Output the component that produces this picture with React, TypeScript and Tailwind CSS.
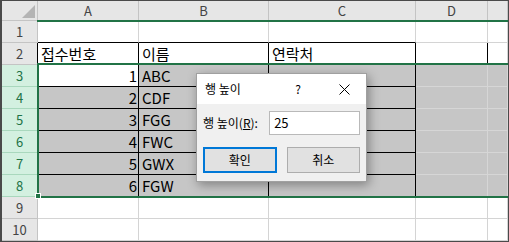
import React from 'react';

const colLetters = ['A', 'B', 'C', 'D', ''];
const names = ['ABC', 'CDF', 'FGG', 'FWC', 'GWX', 'FGW'];

function cellText(r: number, c: number): string {
  if (r === 2) return ['접수번호', '이름', '연락처', '', ''][c];
  if (r >= 3 && r <= 8) {
    if (c === 0) return String(r - 2);
    if (c === 1) return names[r - 3];
  }
  return '';
}

function DataCell({ r, c }: { r: number; c: number }) {
  const sel = r >= 3 && r <= 8;
  const active = r === 3 && c === 0;
  const bg = sel && !active ? 'bg-[#c6c6c6]' : 'bg-white';

  let right = sel ? 'border-r-[#d6d6d6]' : 'border-r-[#d4d4d4]';
  if ((r >= 2 && r <= 8 && c <= 2) || (r === 2 && c === 3)) right = 'border-r-black';

  let bottom = sel ? 'border-b-[#d6d6d6]' : 'border-b-[#d4d4d4]';
  if (r >= 1 && r <= 7 && c <= 2) bottom = 'border-b-black';

  const align = r >= 3 && c === 0 ? 'justify-end pr-[1px]' : 'justify-start pl-[3px]';

  return (
    <div className={`flex items-center border-r border-b ${right} ${bottom} ${bg} ${align} text-[15px] leading-none text-black whitespace-nowrap overflow-hidden`}>
      {cellText(r, c)}
    </div>
  );
}

function RowHeader({ r }: { r: number }) {
  const sel = r >= 3 && r <= 8;
  return (
    <div
      className={`flex items-center justify-center border-r border-b text-[13px] leading-none ${
        sel
          ? 'bg-[#d3f0e0] text-[#217346] border-b-[#a9d8bd] border-r-[#217346]'
          : r === 2
          ? 'bg-[#e6e6e6] text-[#444] border-b-[#c4c4c4] border-r-black'
          : 'bg-[#e6e6e6] text-[#444] border-b-[#c4c4c4] border-r-[#c4c4c4]'
      }`}
    >
      {r}
    </div>
  );
}

export default function App() {
  const rows = [1, 2, 3, 4, 5, 6, 7, 8, 9, 10];

  return (
    <div className="relative w-[509px] h-[242px] overflow-hidden border border-l-2 border-[#4a4a4a] bg-white font-['Noto_Sans_CJK_KR','Noto_Sans',sans-serif]">
      <div className="grid grid-cols-[36px_101px_130px_147px_72px_20px] grid-rows-[20px_repeat(10,22px)]">
        {/* corner */}
        <div className="relative border-r border-b border-[#c4c4c4] bg-[#e6e6e6]">
          <svg className="absolute right-[2px] bottom-[2px]" width="13" height="13" viewBox="0 0 13 13">
            <polygon points="13,0 13,13 0,13" fill="#b4b4b4" />
          </svg>
        </div>
        {colLetters.map((l, i) => (
          <div key={l + i} className="flex items-center justify-center border-r border-b border-[#c4c4c4] bg-[#e6e6e6] text-[13px] leading-none text-[#444]">
            {l}
          </div>
        ))}

        {rows.map((r) => (
          <React.Fragment key={r}>
            <RowHeader r={r} />
            {[0, 1, 2, 3, 4].map((c) => (
              <DataCell key={c} r={r} c={c} />
            ))}
          </React.Fragment>
        ))}
      </div>

      {/* header highlight */}
      <div className="absolute left-[35px] right-0 top-[19px] h-[2px] bg-[#217346]" />

      {/* selection box */}
      <div className="pointer-events-none absolute left-[35px] right-[-2px] top-[62px] h-[135px] border-2 border-[#217346]" />
      <div className="absolute left-[33px] top-[192px] w-[6px] h-[6px] bg-[#217346] border border-white" />

      {/* row height dialog */}
      <div className="absolute left-[194px] top-[72px] w-[171px] h-[109px] flex flex-col border border-[#a0a0a0] shadow-[2px_3px_10px_rgba(0,0,0,0.35)] text-[12px] text-black">
        <div className="h-[30px] bg-white flex items-center pl-[8px] pr-[16px]">
          <span className="flex-1">행 높이</span>
          <span className="w-[10px] text-center mr-[36px]">?</span>
          <svg width="11" height="11" viewBox="0 0 11 11">
            <path d="M0.5 0.5 L10.5 10.5 M10.5 0.5 L0.5 10.5" stroke="#000" strokeWidth="1" />
          </svg>
        </div>
        <div className="flex-1 bg-[#f0f0f0] flex flex-col px-[6px] pt-[7px]">
          <div className="flex items-center">
            <span className="w-[67px] whitespace-nowrap">
              행 높이(<span className="underline">R</span>):
            </span>
            <div className="w-[92px] h-[24px] bg-white border border-[#b9b9b9] flex items-center pl-[4px] text-[13px]">
              25
            </div>
          </div>
          <div className="flex gap-[10px] mt-[12px]">
            <button className="w-[74px] h-[26px] bg-[#e1e1e1] border-2 border-[#0078d7] text-[12px]">확인</button>
            <button className="w-[74px] h-[26px] bg-[#e1e1e1] border border-[#adadad] text-[12px]">취소</button>
          </div>
        </div>
      </div>
    </div>
  );
}
